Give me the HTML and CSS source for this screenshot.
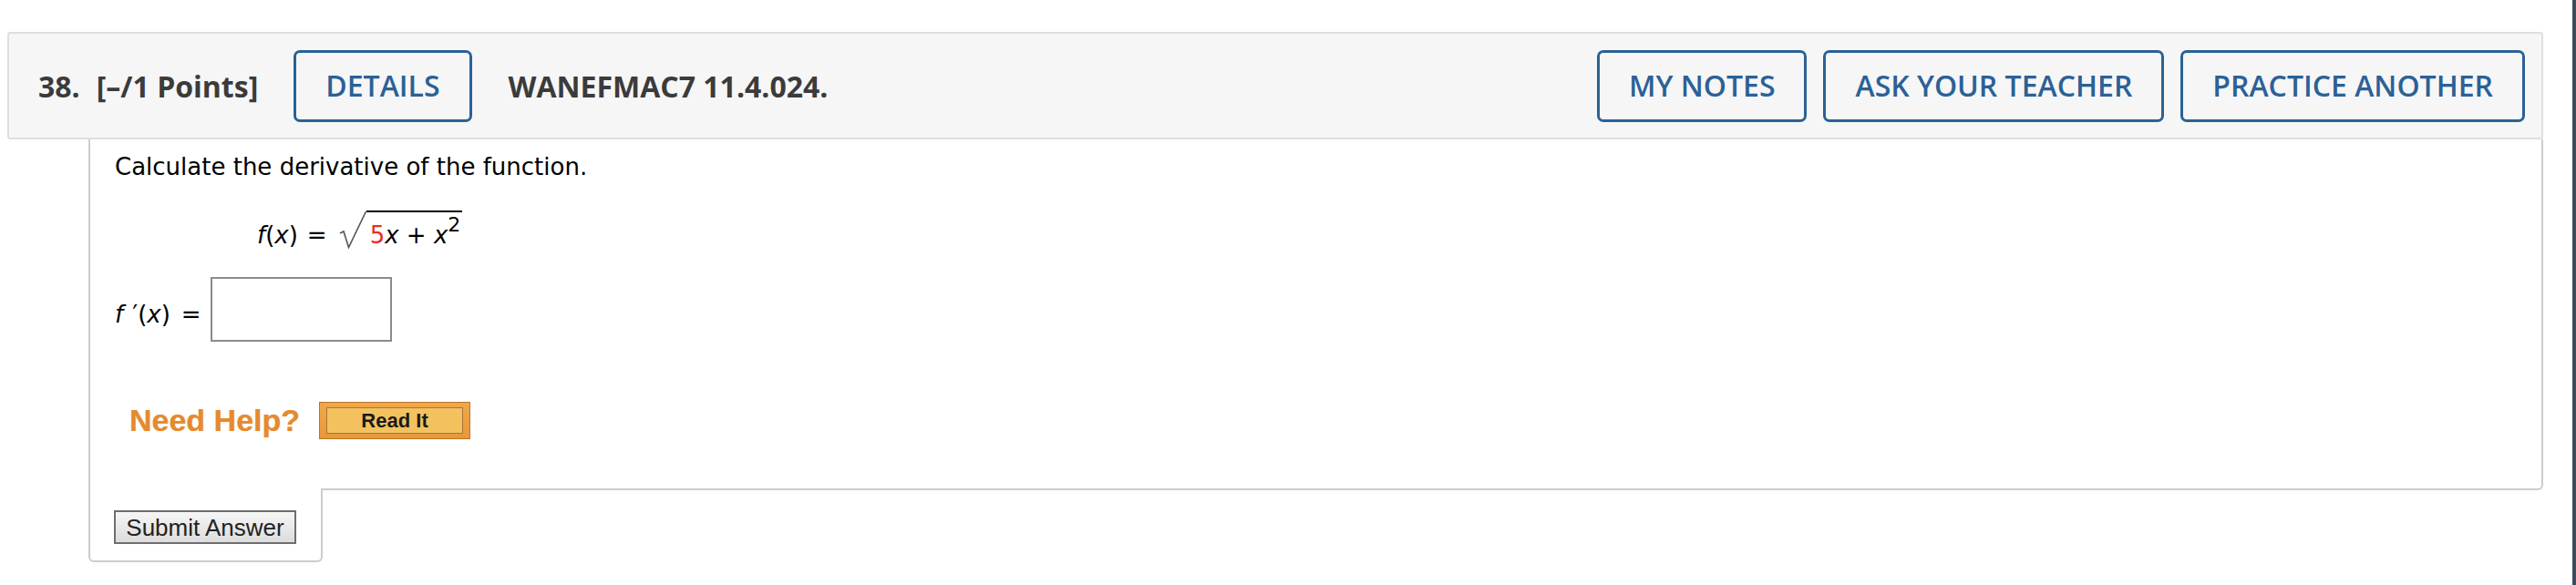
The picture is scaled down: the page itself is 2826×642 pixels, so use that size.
FILE: index.html
```html
<!DOCTYPE html>
<html lang="en">
<head>
<meta charset="utf-8">
<title>Question 38</title>
<link rel="stylesheet" href="styles.css">
</head>
<body>
<div class="screen">
  <main class="page">
    <section class="question">
      <header class="qhead">
        <span class="qnum">38.</span>
        <span class="qpoints">[–/1 Points]</span>
        <button class="obtn details">DETAILS</button>
        <span class="qcode">WANEFMAC7 11.4.024.</span>
        <div class="qactions">
          <button class="obtn">MY NOTES</button>
          <button class="obtn">ASK YOUR TEACHER</button>
          <button class="obtn">PRACTICE ANOTHER</button>
        </div>
      </header>
      <div class="qbody">
        <p class="prompt">Calculate the derivative of the function.</p>
        <div class="mathrow">
          <span class="mtext"><i>f</i>(<i>x</i>)</span>
          <span class="mtext eq">=</span>
          <svg class="radical" width="30" height="42" viewBox="0 0 30 42" aria-hidden="true">
            <path d="M1 25 L5 23 L10.5 40.5 L29.5 1" fill="none" stroke="#555" stroke-width="1.6" stroke-linejoin="miter"/>
          </svg>
          <span class="radicand"><span class="red">5</span><i>x</i> + <i>x</i><sup>2</sup></span>
        </div>
        <div class="answerrow">
          <span class="mtext"><i>f</i><span class="prime">′</span>(<i>x</i>)</span>
          <span class="mtext eq2">=</span>
          <input class="answer" type="text" aria-label="answer">
        </div>
        <div class="helprow">
          <span class="needhelp">Need Help?</span>
          <button class="readit"><span class="readit-inner">Read It</span></button>
        </div>
      </div>
      <div class="submittab">
        <button class="submit">Submit Answer</button>
      </div>
    </section>
  </main>
  <div class="edge"></div>
</div>
</body>
</html>
```

FILE: styles.css
```css
html, body {
  margin: 0;
  padding: 0;
  background: #ffffff;
}

.screen {
  display: flex;
  width: 2826px;
  height: 642px;
  overflow: hidden;
}

.page {
  flex: 1;
  padding: 35px 32px 0 8px;
}

.edge {
  width: 4px;
  background: #3c4b5f;
}

.qhead {
  display: flex;
  align-items: center;
  height: 114px;
  padding: 0 18px 0 32px;
  background: #f6f6f6;
  border: 2px solid #dfdfdf;
  border-radius: 3px;
  font-family: "Open Sans", "Liberation Sans", sans-serif;
  font-size: 32px;
  font-weight: 700;
  color: #3b3b3b;
}

.qnum {
  margin-right: 18px;
}

.qpoints {
  margin-right: 39px;
}

.qcode {
  margin-left: 40px;
}

.qactions {
  display: flex;
  gap: 18px;
  margin-left: auto;
}

.obtn {
  box-sizing: border-box;
  height: 79px;
  padding: 0 32px;
  background: transparent;
  border: 3px solid #2b6196;
  border-radius: 7px;
  color: #2b6196;
  font-family: "Open Sans", "Liberation Sans", sans-serif;
  font-size: 32px;
  font-weight: 600;
  line-height: 1;
  cursor: pointer;
}

.qbody {
  margin-left: 89px;
  padding: 15px 27px 0 27px;
  height: 368px;
  border-left: 2px solid #cccccc;
  border-right: 2px solid #cccccc;
  border-bottom: 2px solid #cccccc;
  border-bottom-right-radius: 6px;
  font-family: "DejaVu Sans", Verdana, sans-serif;
  font-size: 26px;
  color: #000;
}

.prompt {
  margin: 0;
  line-height: 30px;
}

.mathrow {
  display: flex;
  align-items: flex-end;
  margin-top: 33px;
  margin-left: 156px;
  line-height: 30px;
}

.mtext i, .radicand i {
  font-style: italic;
}

.eq {
  margin: 0 13px 0 10px;
}

.radical {
  display: block;
  flex: none;
}

.radicand {
  border-top: 2px solid #000;
  padding: 10px 2px 0 4px;
  line-height: 30px;
  white-space: pre;
}

.red {
  color: #e6301f;
}

.radicand sup {
  font-size: 22px;
  line-height: 0;
  vertical-align: 13px;
}

.answerrow {
  display: flex;
  align-items: center;
  margin-top: 31px;
  line-height: 30px;
}

.answerrow .mtext {
  padding-top: 10px;
}

.prime {
  display: inline-block;
  width: 16px;
  text-align: right;
}

.eq2 {
  margin: 0 10px 0 12px;
}

.answer {
  box-sizing: border-box;
  width: 199px;
  height: 71px;
  margin: 0;
  border: 2px solid #8a8a8a;
  background: #fff;
  font-size: 26px;
}

.helprow {
  display: flex;
  align-items: center;
  margin-top: 66px;
  padding-left: 16px;
}

.needhelp {
  font-family: "Liberation Sans", Arial, sans-serif;
  font-weight: 700;
  font-size: 34px;
  color: #e58a2f;
  text-shadow: 0 0 1px rgba(229, 138, 47, 0.6);
}

.readit {
  box-sizing: border-box;
  width: 166px;
  height: 41px;
  margin-left: 21px;
  padding: 5px 7px;
  background: linear-gradient(#f0a848, #e9983a);
  border: 1px solid #b57430;
  display: flex;
  cursor: pointer;
}

.readit-inner {
  flex: 1;
  display: flex;
  align-items: center;
  justify-content: center;
  background: #f3c25f;
  border: 1px solid #a8743a;
  font-family: "Liberation Sans", Arial, sans-serif;
  font-weight: 700;
  font-size: 22px;
  color: #1a1a1a;
}

.submittab {
  box-sizing: border-box;
  width: 257px;
  height: 81px;
  margin-left: 89px;
  margin-top: -2px;
  padding: 24px 0 0 26px;
  background: #fff;
  border-left: 2px solid #cccccc;
  border-right: 2px solid #cccccc;
  border-bottom: 2px solid #cccccc;
  border-radius: 0 0 6px 6px;
}

.submit {
  box-sizing: border-box;
  width: 200px;
  height: 37px;
  padding: 0;
  background: linear-gradient(#f6f6f6, #dcdcdc);
  border: 2px solid #6e6e6e;
  font-family: "Liberation Sans", Arial, sans-serif;
  font-size: 26px;
  color: #222;
  line-height: 1;
  cursor: pointer;
}
```
